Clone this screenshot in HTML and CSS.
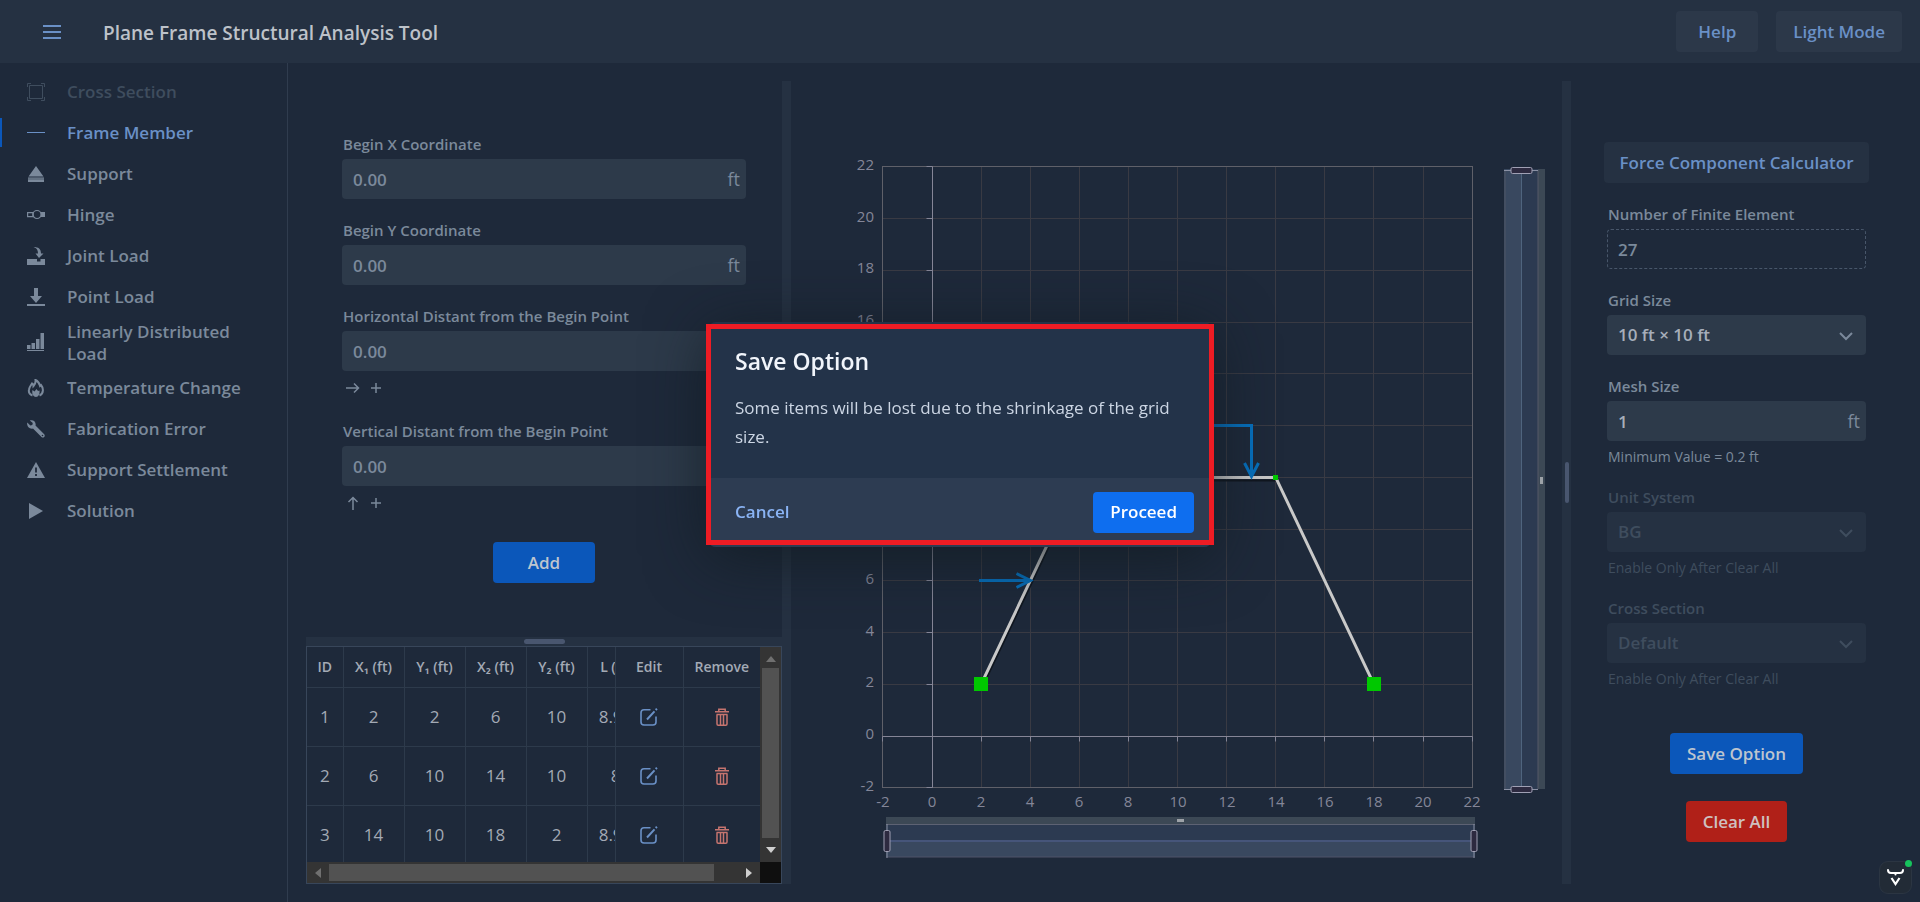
FILE: index.html
```html
<!DOCTYPE html>
<html lang="en">
<head>
<meta charset="utf-8">
<title>Plane Frame Structural Analysis Tool</title>
<link rel="stylesheet" href="styles.css">
</head>
<body>
<div class="app">
  <header class="topbar">
    <button class="menu-btn" aria-label="Menu">
      <svg width="20" height="16" viewBox="0 0 20 16"><path d="M1 2h18M1 8h18M1 14h18" stroke="currentColor" stroke-width="2"/></svg>
    </button>
    <h1 class="title">Plane Frame Structural Analysis Tool</h1>
    <div class="topbar-actions">
      <button class="btn btn-top btn-help">Help</button>
      <button class="btn btn-top">Light Mode</button>
    </div>
  </header>
  <div class="body">
    <nav class="sidebar">
      <a href="#cross" class="nav-item disabled"><svg class="ico" viewBox="0 0 18 18"><path d="M2.500 2.500h13v13h-13zM.5 4V.5H4M14 .5h3.500V4M17.500 14v3.500H14M4 17.500H.5V14" fill="none" stroke="currentColor"/></svg><span>Cross Section</span></a>
      <a href="#frame" class="nav-item active"><svg class="ico" viewBox="0 0 18 18"><path d="M0 8.500h18" stroke="currentColor"/></svg><span>Frame Member</span></a>
      <a href="#support" class="nav-item"><svg class="ico" viewBox="0 0 18 18"><path d="M9 1l7.500 10.500h-15zM1 12.500h16V17H1z" fill="currentColor"/><path d="M1 14h16" stroke="#1e293a" stroke-width=".5"/></svg><span>Support</span></a>
      <a href="#hinge" class="nav-item"><svg class="ico" viewBox="0 0 18 18"><path d="M.6 6.600H6v4H.6z" fill="none" stroke="currentColor" stroke-width="1.200"/><path d="M14 6h4v5h-4z" fill="currentColor"/><circle cx="10" cy="8.500" r="4" fill="none" stroke="currentColor" stroke-width="1.200"/></svg><span>Hinge</span></a>
      <a href="#joint" class="nav-item"><svg class="ico" viewBox="0 0 18 18"><path d="M6.500 0c5 0 7.500 2 7.500 6.500h2.500L12 11 8.500 6.500H11C11 3.500 10 1 6.500 0zM0 12h10v2.500h3.500V12H18v6H0z" fill="currentColor"/></svg><span>Joint Load</span></a>
      <a href="#point" class="nav-item"><svg class="ico" viewBox="0 0 18 18"><path d="M7 0h4v8h4l-6 7-6-7h4zM0 16h18v2H0z" fill="currentColor"/></svg><span>Point Load</span></a>
      <a href="#linear" class="nav-item tall"><svg class="ico" viewBox="0 0 18 18"><path d="M0 12h3.500v4H0zM4.500 10H8v6H4.500zM9 6h3.500v10H9zM13.500 0H17v16h-3.500zM0 17h17v1H0z" fill="currentColor"/></svg><span>Linearly Distributed Load</span></a>
      <a href="#temp" class="nav-item"><svg class="ico" viewBox="0 0 18 18"><path d="M5.500 16.500C2.500 15.500 1.500 13 2 10.500 2.500 7.500 4 6.500 5 4.500c1 .5 1.500 1.500 1.500 2.500C8 5.500 8.800 3.500 8.500 1c4 2 4 4.500 4.500 6l1-1c2.500 3 3 8.500-1.500 10.500" fill="none" stroke="currentColor" stroke-width="2"/><path d="M5.500 11l2 1.500L9.500 10l1.500 2 1.500-.5c.5 3.500-1 6.500-3.500 6.500s-4.500-3-3.500-7z" fill="currentColor"/></svg><span>Temperature Change</span></a>
      <a href="#fab" class="nav-item"><svg class="ico" viewBox="0 0 18 18"><path d="M.3 2.500l3 3 2-.5.500-2-3-2.500c3-1.300 6.700 1 5.700 5l8.700 8.800c1.700 2.200-1 4.200-2.700 2.700L6 8.500C2.500 9.500-.7 6 .3 2.500z" fill="currentColor"/><circle cx="15.500" cy="15.500" r=".8" fill="#1e293a"/></svg><span>Fabrication Error</span></a>
      <a href="#settle" class="nav-item"><svg class="ico" viewBox="0 0 18 18"><path d="M9 1l9 16H0z" fill="currentColor"/><path d="M9 6.500v5M9 13v2" stroke="#1e293a" stroke-width="1.800"/></svg><span>Support Settlement</span></a>
      <a href="#solution" class="nav-item"><svg class="ico" viewBox="0 0 18 18"><path d="M2 1l14 8-14 8z" fill="currentColor"/></svg><span>Solution</span></a>
    </nav>
    <main class="work">
      <section class="left">
        <form class="form">
          <div class="field"><label for="bx">Begin X Coordinate</label><div class="control"><input id="bx" value="0.00"><span class="unit">ft</span></div></div>
          <div class="field"><label for="by">Begin Y Coordinate</label><div class="control"><input id="by" value="0.00"><span class="unit">ft</span></div></div>
          <div class="field"><label for="hd">Horizontal Distant from the Begin Point</label><div class="control"><input id="hd" value="0.00"><span class="unit">ft</span></div>
            <div class="hint-icons"><svg width="14" height="14" viewBox="0 0 14 14"><path d="M0 7h12.500M8 2.500L12.500 7 8 11.500"/></svg><svg width="14" height="14" viewBox="0 0 14 14"><path d="M2 7h10M7 2v10"/></svg></div></div>
          <div class="field"><label for="vd">Vertical Distant from the Begin Point</label><div class="control"><input id="vd" value="0.00"><span class="unit">ft</span></div>
            <div class="hint-icons"><svg width="14" height="14" viewBox="0 0 14 14"><path d="M7 14V1.500M2.500 6L7 1.500 11.500 6"/></svg><svg width="14" height="14" viewBox="0 0 14 14"><path d="M2 7h10M7 2v10"/></svg></div></div>
          <button type="button" class="btn btn-primary btn-add">Add</button>
        </form>
        <div class="split-h"><span class="grip-h"></span></div>
        <div class="grid-box">
          <div class="table-wrap">
            <table class="members">
              <colgroup><col class="c-id"><col class="c-n"><col class="c-n"><col class="c-n"><col class="c-n"><col class="c-l"><col class="c-edit"><col class="c-rem"></colgroup>
              <thead><tr><th>ID</th><th>X₁ (ft)</th><th>Y₁ (ft)</th><th>X₂ (ft)</th><th>Y₂ (ft)</th><th class="clip"><span>L (ft)</span></th><th>Edit</th><th>Remove</th></tr></thead>
              <tbody>
                <tr><td>1</td><td>2</td><td>2</td><td>6</td><td>10</td><td class="clip"><span>8.94</span></td><td><button class="icon-btn edit" aria-label="Edit 1"><svg width="18" height="18" viewBox="0 0 18 18"><use href="#i-edit"/></svg></button></td><td><button class="icon-btn trash" aria-label="Remove 1"><svg width="18" height="18" viewBox="0 0 18 18"><use href="#i-trash"/></svg></button></td></tr>
                <tr><td>2</td><td>6</td><td>10</td><td>14</td><td>10</td><td class="clip"><span>8</span></td><td><button class="icon-btn edit" aria-label="Edit 2"><svg width="18" height="18" viewBox="0 0 18 18"><use href="#i-edit"/></svg></button></td><td><button class="icon-btn trash" aria-label="Remove 2"><svg width="18" height="18" viewBox="0 0 18 18"><use href="#i-trash"/></svg></button></td></tr>
                <tr><td>3</td><td>14</td><td>10</td><td>18</td><td>2</td><td class="clip"><span>8.94</span></td><td><button class="icon-btn edit" aria-label="Edit 3"><svg width="18" height="18" viewBox="0 0 18 18"><use href="#i-edit"/></svg></button></td><td><button class="icon-btn trash" aria-label="Remove 3"><svg width="18" height="18" viewBox="0 0 18 18"><use href="#i-trash"/></svg></button></td></tr>
              </tbody>
            </table>
          </div>
          <div class="vbar"><svg class="cap dim" viewBox="0 0 10 6"><path d="M5 0l5 6H0z"/></svg><span class="vthumb"></span><svg class="cap" viewBox="0 0 10 6"><path d="M0 0h10L5 6z"/></svg></div>
          <div class="hbar"><svg class="cap side dim" viewBox="0 0 6 10"><path d="M6 0v10L0 5z"/></svg><span class="hthumb"></span><svg class="cap side" viewBox="0 0 6 10"><path d="M0 0l6 5-6 5z"/></svg></div>
          <div class="corner"></div>
        </div>
      </section>
      <div class="split-v"></div>
      <section class="chart">
        <svg class="plot" id="plot" viewBox="791 81 771 803" role="img" aria-label="Plane frame plot"></svg>
      </section>
      <div class="split-v"><span class="grip-v"></span></div>
      <aside class="right">
        <button class="btn btn-flat">Force Component Calculator</button>
        <div class="fields">
          <div class="field"><label for="fe">Number of Finite Element</label><div class="control readonly"><input id="fe" value="27" readonly></div></div>
          <div class="field"><label for="gs">Grid Size</label><div class="control strong"><select id="gs"><option>10 ft × 10 ft</option></select><svg class="chev" viewBox="0 0 14 8"><path d="M1 1l6 6 6-6"/></svg></div></div>
          <div class="field"><label for="ms">Mesh Size</label><div class="control strong"><input id="ms" value="1"><span class="unit">ft</span></div><p class="help">Minimum Value = 0.2 ft</p></div>
          <div class="field off"><label for="us">Unit System</label><div class="control"><select id="us" disabled><option>BG</option></select><svg class="chev" viewBox="0 0 14 8"><path d="M1 1l6 6 6-6"/></svg></div><p class="help">Enable Only After Clear All</p></div>
          <div class="field off"><label for="cs">Cross Section</label><div class="control"><select id="cs" disabled><option>Default</option></select><svg class="chev" viewBox="0 0 14 8"><path d="M1 1l6 6 6-6"/></svg></div><p class="help">Enable Only After Clear All</p></div>
        </div>
        <div class="actions">
          <button class="btn btn-primary">Save Option</button>
          <button class="btn btn-danger">Clear All</button>
        </div>
      </aside>
    </main>
  </div>
</div>

<div class="overlay">
  <div class="dialog" role="dialog" aria-labelledby="dlg-title">
    <div class="dialog-body">
      <h2 id="dlg-title">Save Option</h2>
      <p>Some items will be lost due to the shrinkage of the grid size.</p>
    </div>
    <div class="dialog-foot">
      <button class="link-btn">Cancel</button>
      <button class="btn btn-proceed">Proceed</button>
    </div>
  </div>
</div>

<button class="badge" aria-label="Assistant">
  <svg width="17" height="17" viewBox="0 0 17 17"><path d="M1 1c0 2.500 1 3 3 3h9c2 0 3-.5 3-3M8.500 4v1.500" fill="none" stroke="#fff" stroke-width="2" stroke-linecap="round"/><path d="M4.500 9l4 6 4-6" fill="none" stroke="#fff" stroke-width="2.200"/></svg>
  <span class="dot"></span>
</button>

<svg class="defs" width="0" height="0">
  <defs>
    <g id="i-edit" fill="none" stroke="currentColor" stroke-width="1.600"><path d="M10.500 1.800H4a3 3 0 0 0-3 3V14a3 3 0 0 0 3 3h9a3 3 0 0 0 3-3V8.500"/><path d="M7 11.500l7.500-8.200M15.700 2l1.200-1.300" stroke-width="2"/></g>
    <g id="i-trash" fill="none" stroke="currentColor" stroke-width="1.500"><path d="M5.800 3V1.200h6.400V3M2 3.800h14M3.500 6.500h11M4 6.500V16c0 .8.500 1.200 1.200 1.200h7.600c.7 0 1.200-.4 1.200-1.200V6.500M7.500 7v10M10.500 7v10"/></g>
  </defs>
</svg>
<script src="plot.js"></script>
</body>
</html>
```
FILE: styles.css
```css
* { box-sizing: border-box; }
body { margin: 0; background: #1e293a; color: #7b899b; font: 16px/22px "Open Sans", "Noto Sans", sans-serif; }
button, input, select { font: inherit; color: inherit; margin: 0; border: 0; }
button { cursor: pointer; }
h1, h2, p { margin: 0; }
.app { min-height: 100vh; display: flex; flex-direction: column; }
.defs { display: block; position: absolute; }

.topbar { height: 63px; background: #253142; display: flex; align-items: center; padding: 0 18px 0 42px; }
.menu-btn { background: none; color: #6a90c6; padding: 0; width: 20px; height: 20px; display: flex; align-items: center; }
.title { margin-left: 41px; font-size: 19px; font-weight: 600; color: #bdc2c9; flex: 1; padding-top: 2px; }
.topbar-actions { display: flex; gap: 18px; }
.btn { height: 41px; border-radius: 4px; padding: 0 17px; font-weight: 600; font-size: 17px; white-space: nowrap; }
.btn-top { background: #2c3849; color: #6a90c6; }
.btn-help { padding: 0 22px; }
.btn-flat { background: #253142; color: #6a90c6; }
.btn-primary { background: #0b57ba; color: #bdc5cf; }
.btn-danger { background: #b02018; color: #cfc0c0; }

.body { flex: 1; display: flex; }
.sidebar { width: 288px; border-right: 1px solid #303c4e; padding-top: 8px; }
.nav-item { position: relative; display: flex; align-items: center; gap: 22px; min-height: 41px; padding: 0 40px 0 27px; color: #7b899b; text-decoration: none; font-size: 17px; font-weight: 600; }
.nav-item span { padding-top: 1px; }
.nav-item.tall { min-height: 50px; }
.nav-item.disabled { color: #3f4d5e; }
.nav-item.active { color: #6a90c6; }
.nav-item.active::before { content: ""; position: absolute; left: 0; top: 6px; bottom: 6px; width: 2px; background: #0b57ba; }
.ico { width: 18px; height: 18px; flex: none; }

.work { flex: 1; min-width: 0; display: flex; padding: 18px; }
.left { width: 476px; display: flex; flex-direction: column; }
.form { flex: 1; display: flex; flex-direction: column; gap: 20px; padding: 52px 36px 0; }
.field label { display: block; padding: 0 1px; margin-bottom: 4px; font-size: 15px; font-weight: 600; line-height: 22px; }
.control { position: relative; display: flex; align-items: center; height: 40px; background: #2d3a4a; border-radius: 4px; padding-right: 6px; }
.control input, .control select { flex: 1; min-width: 0; height: 40px; padding: 0 11px; background: none; font-size: 17px; font-weight: 600; appearance: none; outline: none; opacity: 1; }
.unit { font-size: 18px; }
.strong input, .strong select { color: #a6aeba; }
.readonly { background: none; border: 1px dashed #48566a; }
.readonly input { padding: 0 10px; }
.chev { position: absolute; right: 13px; top: 17px; width: 14px; height: 8px; fill: none; stroke: currentColor; stroke-width: 2; pointer-events: none; overflow: visible; }
.help { margin-top: 7px; padding: 0 1px; font-size: 14px; line-height: 18px; }
.off { color: #3f4d5e; }
.off .control { background: #253142; }
.hint-icons { height: 25px; margin-top: 4px; padding-left: 4px; display: flex; align-items: center; gap: 9px; }
.hint-icons svg { fill: none; stroke: currentColor; stroke-width: 1.500; }
.btn-add { align-self: center; width: 102px; margin-top: 7px; }

.split-v { width: 9px; background: #253142; display: flex; align-items: center; justify-content: center; }
.split-h { height: 9px; background: #253142; display: flex; align-items: center; justify-content: center; }
.grip-h { width: 41px; height: 5px; border-radius: 3px; background: #49566f; }
.grip-v { width: 4px; height: 41px; border-radius: 2px; background: #49566f; }

.grid-box { border: 1px solid #38465a; display: grid; grid-template-columns: 1fr 21px; grid-template-rows: 215px 21px; }
.table-wrap { overflow: hidden; }
.members { width: 100%; table-layout: fixed; border-collapse: collapse; text-align: center; color: #a3aab5; }
.c-id { width: 36px; }
.c-n { width: 61px; }
.c-l { width: 28px; }
.c-edit { width: 68px; }
.members th { height: 40px; padding: 0; font-size: 14px; font-weight: 600; }
.members td { height: 59px; padding: 0; font-size: 17px; }
.members th, .members td { border-right: 1px solid #2d3a4b; border-bottom: 1px solid #2d3a4b; white-space: nowrap; }
.members th:last-child, .members td:last-child { border-right: 0; }
.members .clip { overflow: hidden; text-align: left; }
.clip span { display: block; width: 56px; text-align: center; }
.icon-btn { background: none; padding: 0; display: block; width: 18px; height: 18px; margin: 0 auto; }
.icon-btn svg { display: block; }
.edit { color: #6a90c6; }
.trash { color: #c6746f; }
.vbar, .hbar { background: #343434; display: flex; align-items: center; }
.vbar { flex-direction: column; padding: 9px 2px; gap: 6px; }
.hbar { padding: 2px 8px; gap: 8px; }
.vthumb { align-self: stretch; flex: 1; background: #525252; margin-bottom: 3px; }
.hthumb { align-self: stretch; flex: 1; background: #525252; margin-right: 24px; }
.cap { width: 10px; height: 6px; flex: none; fill: #cfcfcf; }
.cap.side { width: 6px; height: 10px; }
.cap.dim { fill: #707070; }
.corner { background: #0f0f0f; }

.chart { flex: 1; min-width: 0; display: flex; }
.plot { width: 100%; height: 100%; font-size: 15px; fill: #848698; }

.right { width: 331px; display: flex; flex-direction: column; align-items: center; padding: 61px 33px 0; }
.btn-flat { padding: 0 16px; }
.fields { width: 259px; margin-top: 20px; display: flex; flex-direction: column; gap: 20px; }
.actions { margin-top: 45px; display: flex; flex-direction: column; align-items: center; gap: 27px; }

.overlay { position: fixed; inset: 0; display: flex; align-items: center; justify-content: center; padding-bottom: 34px; pointer-events: none; }
.dialog { position: relative; width: 504px; border-radius: 8px; background: #233349; box-shadow: 0 10px 60px rgba(18, 28, 34, .8); pointer-events: auto; }
.dialog::after { content: ""; position: absolute; inset: 2px -2px; border: 5px solid #ee1c24; pointer-events: none; }
.dialog-body { padding: 23px 27px 27px; color: #ccd6e4; font-size: 17px; line-height: 29px; }
.dialog h2 { font-size: 23px; line-height: 32px; font-weight: 600; color: #f1f5fb; margin-bottom: 16px; }
.dialog-foot { display: flex; align-items: center; justify-content: space-between; background: #2d3c52; border-radius: 0 0 8px 8px; padding: 14px 18px 14px 27px; }
.link-btn { background: none; padding: 0; color: #8ab4f5; font-weight: 600; font-size: 17px; }
.btn-proceed { background: #0e6eef; color: #fff; }

.badge { position: fixed; right: 8px; bottom: 8px; width: 33px; height: 33px; border-radius: 9px; background: #222b36; border: 1px solid #2b3542; padding: 0; display: flex; align-items: center; justify-content: center; }
.dot { position: absolute; right: -1px; top: -2px; width: 7px; height: 7px; border-radius: 50%; background: #16c35c; }
```
FILE: plot.js
```js
const X = v => 932 + 24.55 * v;
const Y = v => 736.2 - 25.88 * v;
const px = v => Math.floor(v) + 0.5;
const line = (x1, y1, x2, y2, c, w = 1) =>
  `<path d="M${x1} ${y1}L${x2} ${y2}" stroke="${c}" stroke-width="${w}" fill="none"/>`;
const rect = (x, y, w, h, fill, extra = '') =>
  `<rect x="${x}" y="${y}" width="${w}" height="${h}" fill="${fill}" ${extra}/>`;
let s = '';

// Grid lines, ticks and axis labels
const left = px(X(-2)), right = px(X(22)), top_ = px(Y(22)), bottom = px(Y(-2));
for (let v = -2; v <= 22; v += 2) {
  const x = px(X(v)), y = px(Y(v));
  s += line(x, top_, x, bottom, '#393a43') + line(left, y, right, y, '#393a43');
}
s += `<rect x="${left}" y="${top_}" width="${right - left}" height="${bottom - top_}" fill="none" stroke="#5f6069"/>`;
s += line(left, px(Y(0)), right, px(Y(0)), '#858596');
s += line(px(X(0)), top_, px(X(0)), bottom, '#858596');
for (let v = -2; v <= 22; v += 2) {
  const x = px(X(v)), y = px(Y(v));
  s += line(x, px(Y(0)), x, px(Y(0)) + 5, '#858596') + line(px(X(0)) - 6, y, px(X(0)), y, '#858596');
  s += `<text x="${Math.round(X(v))}" y="807" text-anchor="middle">${v}</text>`;
  s += `<text x="874" y="${Math.round(Y(v)) + 3}" text-anchor="end">${v}</text>`;
}

// Members with drop shadow
const pts = [[2, 2], [6, 10], [14, 10], [18, 2]].map(([a, b]) => [X(a), Y(b)]);
const path = (dx, dy) => pts.map(p => `${p[0] + dx},${p[1] + dy}`).join(' ');
s += `<polyline points="${path(1, 3)}" fill="none" stroke="#10161f" stroke-width="2"/>`;
s += `<polyline points="${path(0, 0)}" fill="none" stroke="#c9c9c9" stroke-width="3"/>`;
for (const v of [2, 18]) s += rect(Math.round(X(v)) - 7, 677, 14, 14, '#00c800');
s += rect(1273, 475, 5, 5, '#00c800');

// Loads
s += '<g fill="none" stroke="#0670bd" stroke-width="3"><path d="M979 580.500h51M1016.500 573.500l14 7-14 7"/><path d="M1190 425.500h61.500v50M1244.500 463l7 13.500 7-13.500"/></g>';

// Horizontal zoom slider
s += rect(886, 817, 589, 7, '#3c4855') + rect(886, 824, 589, 17, '#2c3a51') + rect(886, 841, 589, 16, '#39485f');
s += line(886, 824.5, 1475, 824.5, '#5d6273') + line(886, 841, 1475, 841, '#46557a', 2) + line(886, 857, 1475, 857, '#4f5369');
for (const x of [887, 1474]) {
  s += line(x, 824, x, 858, '#8a90a4') + rect(x - 3, 830.5, 6, 21, '#2d2a40', 'rx="1.5" stroke="#a0a0b4"');
}
s += rect(1177, 819, 7, 3, '#9da2a8');

// Vertical zoom slider
s += rect(1504, 169, 17, 620, '#39485f') + rect(1521, 169, 17, 620, '#2c3a51') + rect(1538, 169, 7, 620, '#3c4855');
s += line(1505, 170, 1505, 789, '#4f5565') + line(1521.5, 170, 1521.5, 789, '#4f647e') + line(1538, 170, 1538, 789, '#555868');
for (const y of [170.5, 789.5]) {
  s += line(1504, y, 1538, y, '#8a90a4') + rect(1511, y - 3, 21, 6, '#2d2a40', 'rx="1.5" stroke="#a0a0b4"');
}
s += rect(1540, 477, 3, 7, '#9da2a8');

document.getElementById('plot').innerHTML = s;
```
